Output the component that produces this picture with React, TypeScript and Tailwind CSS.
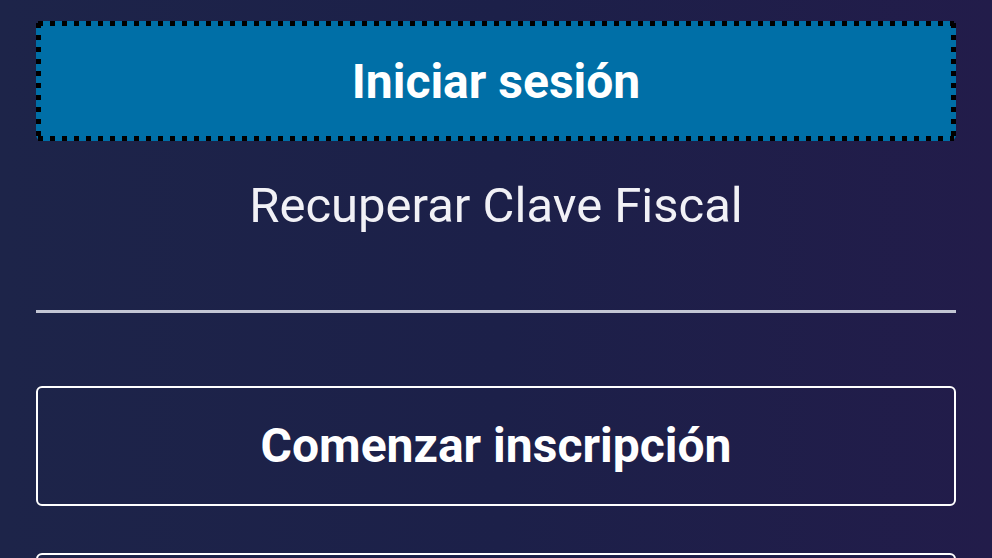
import React from "react";

/** Square-dotted focus ring, drawn as four strips over the button edge */
const DottedRing: React.FC = () => (
  <div className="pointer-events-none absolute inset-0">
    <div className="absolute left-[2px] right-[2px] top-0 h-[5px] bg-[repeating-linear-gradient(90deg,#000_0_5px,transparent_5px_12px)]" />
    <div className="absolute left-[2px] right-[2px] bottom-0 h-[5px] bg-[repeating-linear-gradient(90deg,#000_0_5px,transparent_5px_12px)]" />
    <div className="absolute top-[2px] bottom-[2px] left-0 w-[5px] bg-[repeating-linear-gradient(180deg,#000_0_5px,transparent_5px_12px)]" />
    <div className="absolute top-[2px] bottom-[2px] right-0 w-[5px] bg-[repeating-linear-gradient(180deg,#000_0_5px,transparent_5px_12px)]" />
  </div>
);

export default function App() {
  return (
    <div
      className="h-[558px] w-[992px] overflow-hidden bg-gradient-to-r from-[#1d2449] via-[#1c2049] to-[#221c4a] text-white"
      style={{ fontFamily: "Roboto, 'Liberation Sans', sans-serif" }}
    >
      <div className="flex flex-col px-[36px] pt-[21px]">
        {/* Primary action */}
        <button className="relative flex h-[120px] w-full items-center justify-center rounded-[6px] bg-[#006fa7] pt-[2px] text-[48px] font-bold">
          Iniciar sesión
          <DottedRing />
        </button>

        {/* Recover link */}
        <a className="mt-[36px] block h-[58px] text-center text-[49px] leading-[58px] text-[#f1f1f6]">
          Recuperar Clave Fiscal
        </a>

        <div className="mt-[75px] h-[3px] w-full bg-[#c3c6d4]" />

        {/* Secondary action */}
        <button className="mt-[73px] flex h-[120px] w-full items-center justify-center rounded-[6px] border-2 border-white text-[48px] font-bold">
          Comenzar inscripción
        </button>

        <button className="mt-[47px] h-[120px] w-full rounded-[6px] border-2 border-white" />
      </div>
    </div>
  );
}
